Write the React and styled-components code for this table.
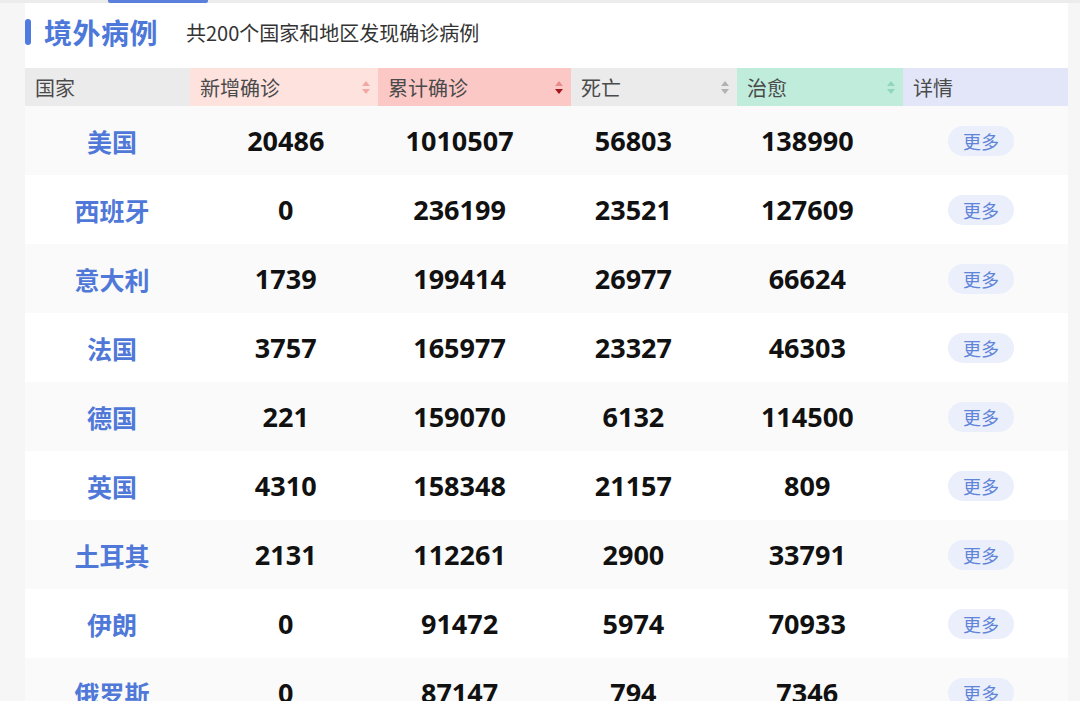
import React from "react";
import styled, { createGlobalStyle } from "styled-components";

const Global = createGlobalStyle`
  html, body { margin: 0; padding: 0; background: #f6f6f6; }
  body { font-family: "Noto Sans", "Noto Sans CJK SC", sans-serif; overflow: hidden; }
  * { box-sizing: border-box; }
`;

const Page = styled.div`
  width: 1080px;
  height: 701px;
  background: #f6f6f6;
  position: relative;
  overflow: hidden;
`;

const TopStrip = styled.div`
  height: 3px;
  background: #ececec;
  position: relative;
`;

const TabMark = styled.div`
  position: absolute;
  left: 108px;
  top: 0;
  width: 100px;
  height: 3px;
  background: #5b80dc;
  border-radius: 0 0 2px 2px;
`;

const Card = styled.div`
  margin: 0 12px 0 25px;
  background: #ffffff;
`;

const TitleBar = styled.div`
  height: 65px;
  display: flex;
  align-items: center;
  padding-bottom: 8px;
`;

const Accent = styled.span`
  width: 6px;
  height: 26px;
  border-radius: 3px;
  background: #4f7ae0;
  margin-right: 13px;
`;

const Title = styled.h1`
  margin: 0;
  font-family: "Noto Sans CJK SC", sans-serif;
  font-size: 28px;
  font-weight: 700;
  color: #4d78d9;
  letter-spacing: 0.5px;
`;

const Subtitle = styled.span`
  margin-left: 28px;
  font-family: "Noto Sans CJK SC", sans-serif;
  font-size: 20px;
  color: #333;
  margin-top: 2px;
`;

const HeadRow = styled.div`
  display: grid;
  grid-template-columns: 165px 188px 193px 166px 166px 165px;
  height: 38px;
`;

const HeadCell = styled.div`
  background: ${p => p.$bg};
  display: flex;
  align-items: center;
  justify-content: space-between;
  padding: 0 7px 0 10px;
  font-family: "Noto Sans CJK SC", sans-serif;
  font-size: 20px;
  color: #4a4a4a;
`;

const SortIcon = styled.svg`
  width: 10px;
  height: 15px;
  flex: none;
`;

function Sort({ up, down }) {
  return (
    <SortIcon viewBox="0 0 10 15">
      <path d="M5 1 L9 6 L1 6 Z" fill={up} />
      <path d="M1 9 L9 9 L5 14 Z" fill={down} />
    </SortIcon>
  );
}

const BodyRow = styled.div`
  display: grid;
  grid-template-columns: repeat(6, 1fr);
  height: 69px;
  align-items: center;
  background: ${p => (p.$alt ? "#fafafa" : "#ffffff")};
`;

const Country = styled.div`
  text-align: center;
  font-family: "Noto Sans CJK SC", sans-serif;
  font-weight: 700;
  font-size: 25px;
  color: #4f78d8;
`;

const Num = styled.div`
  text-align: center;
  font-family: "Noto Sans", "Noto Sans CJK SC", sans-serif;
  font-weight: 700;
  font-size: 27px;
  color: #111;
`;

const MoreWrap = styled.div`
  display: flex;
  justify-content: center;
`;

const More = styled.span`
  display: inline-flex;
  align-items: center;
  justify-content: center;
  width: 66px;
  height: 30px;
  border-radius: 15px;
  background: #eaeffb;
  color: #5f84d8;
  font-family: "Noto Sans CJK SC", sans-serif;
  font-size: 18px;
`;

const rows = [
  ["美国", 20486, 1010507, 56803, 138990],
  ["西班牙", 0, 236199, 23521, 127609],
  ["意大利", 1739, 199414, 26977, 66624],
  ["法国", 3757, 165977, 23327, 46303],
  ["德国", 221, 159070, 6132, 114500],
  ["英国", 4310, 158348, 21157, 809],
  ["土耳其", 2131, 112261, 2900, 33791],
  ["伊朗", 0, 91472, 5974, 70933],
  ["俄罗斯", 0, 87147, 794, 7346],
];

export default function App() {
  return (
    <Page>
      <Global />
      <TopStrip>
        <TabMark />
      </TopStrip>
      <Card>
        <TitleBar>
          <Accent />
          <Title>境外病例</Title>
          <Subtitle>共200个国家和地区发现确诊病例</Subtitle>
        </TitleBar>
        <HeadRow>
          <HeadCell $bg="#ebebeb">国家</HeadCell>
          <HeadCell $bg="#fde2de">
            新增确诊
            <Sort up="#f2a9a3" down="#f2a9a3" />
          </HeadCell>
          <HeadCell $bg="#fcc8c5">
            累计确诊
            <Sort up="#e98b8b" down="#a3161c" />
          </HeadCell>
          <HeadCell $bg="#ebebeb">
            死亡
            <Sort up="#b2b2b2" down="#b2b2b2" />
          </HeadCell>
          <HeadCell $bg="#bfecdb">
            治愈
            <Sort up="#8fd7b8" down="#8fd7b8" />
          </HeadCell>
          <HeadCell $bg="#e2e6f8">详情</HeadCell>
        </HeadRow>
        {rows.map((r, i) => (
          <BodyRow key={r[0]} $alt={i % 2 === 0}>
            <Country>{r[0]}</Country>
            <Num>{r[1]}</Num>
            <Num>{r[2]}</Num>
            <Num>{r[3]}</Num>
            <Num>{r[4]}</Num>
            <MoreWrap>
              <More>更多</More>
            </MoreWrap>
          </BodyRow>
        ))}
      </Card>
    </Page>
  );
}
